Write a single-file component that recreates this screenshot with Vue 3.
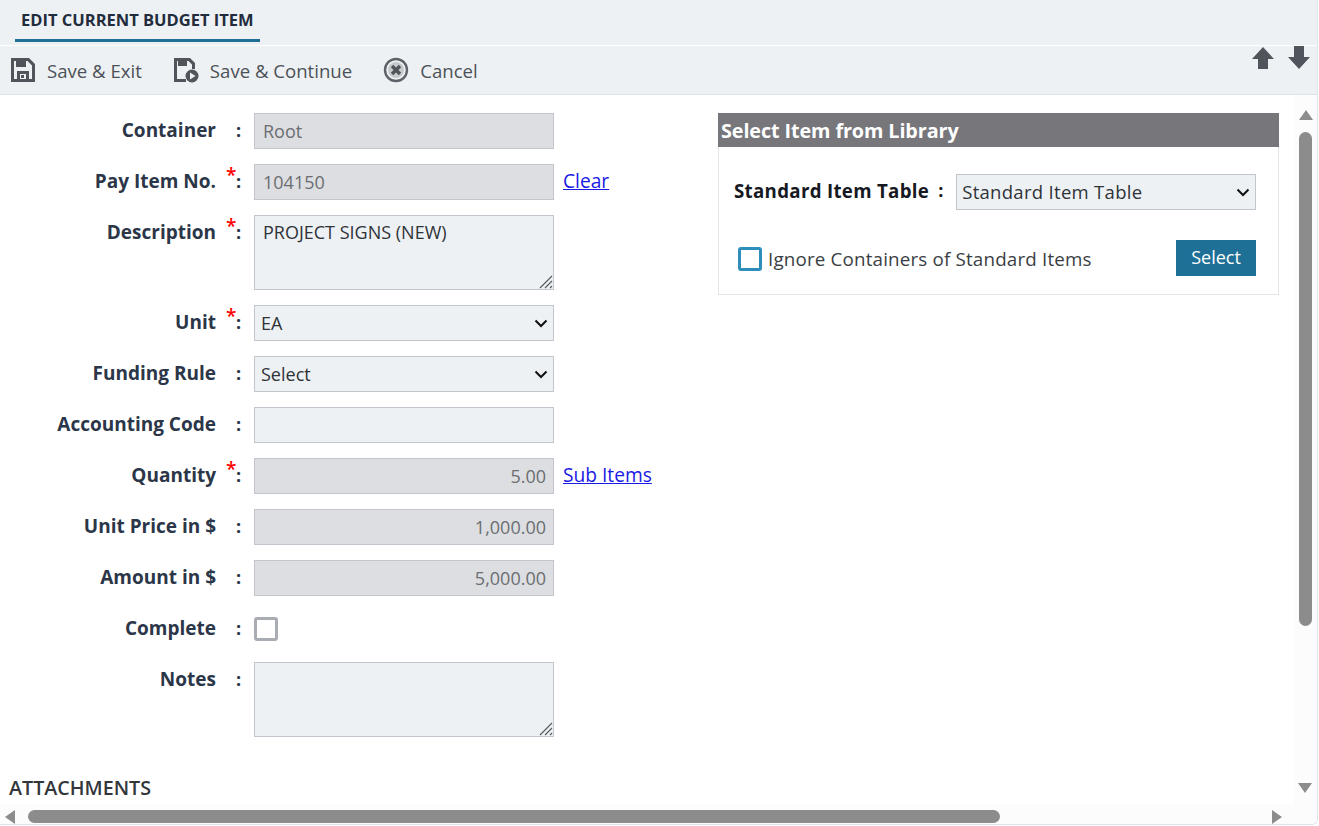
<script setup>
import { ref } from 'vue'

const notes = ref('')
const description = ref('PROJECT SIGNS (NEW)')
</script>

<template>
  <div class="page">
    <div class="tabbar">
      <div class="tab">EDIT CURRENT BUDGET ITEM</div>
    </div>

    <div class="toolbar">
      <a class="tool tool-save">
        <svg width="26" height="26" viewBox="0 0 26 26">
          <path fill="#50555c" fill-rule="evenodd" d="M1 1h18l6 6v18H1zM4 4v18h3v-8h12v8h3V8.5L17.5 4H16v6H6V4zM10 17v5h6v-5z" />
          <rect x="11" y="18" width="3" height="3" fill="#50555c" />
        </svg>
        <span>Save &amp; Exit</span>
      </a>
      <a class="tool tool-continue">
        <svg width="26" height="26" viewBox="0 0 26 26">
          <path fill="#50555c" fill-rule="evenodd" d="M1 1h16l5 5v6h-3V7.5L15.5 4H14v5H5V4H4v18h9v3H1z" />
          <circle cx="19" cy="19" r="6.5" fill="#50555c" />
          <path fill="#eef1f4" d="M17 15.5l5.5 3.5-5.5 3.5z" />
        </svg>
        <span>Save &amp; Continue</span>
      </a>
      <a class="tool">
        <svg width="26" height="26" viewBox="0 0 26 26">
          <circle cx="13" cy="13" r="11" fill="#eef1f4" stroke="#5e6268" stroke-width="2.4" />
          <circle cx="13" cy="13" r="8" fill="#8b8e92" opacity=".4" />
          <path d="M9 9l8 8M17 9l-8 8" stroke="#50555c" stroke-width="3.4" />
        </svg>
        <span>Cancel</span>
      </a>
      <div class="arrows">
        <svg width="24" height="24" viewBox="0 0 24 24"><path fill="#50555c" d="M12 1l11 12h-6v10H7V13H1z" /></svg>
        <svg width="24" height="24" viewBox="0 0 24 24"><path fill="#50555c" d="M7 0h10v11h6L12 23 1 11h6z" /></svg>
      </div>
    </div>

    <div class="body">
      <div class="content">
        <div class="columns">
          <form class="form" @submit.prevent>
            <div class="row">
              <label>Container</label><i></i><b>:</b>
              <input class="field off" value="Root" disabled />
            </div>
            <div class="row">
              <label>Pay Item No.</label><i class="req">*</i><b>:</b>
              <input class="field off" value="104150" disabled />
              <a class="link" href="#">Clear</a>
            </div>
            <div class="row">
              <label>Description</label><i class="req">*</i><b>:</b>
              <span class="area-wrap">
                <textarea v-model="description" class="field area"></textarea>
                <svg class="grip" width="14" height="14" viewBox="0 0 14 14">
                  <path d="M1 13L13 1M6 13l7-7M11 13l2-2" stroke="#55585c" stroke-width="1.1" fill="none" />
                </svg>
              </span>
            </div>
            <div class="row">
              <label>Unit</label><i class="req">*</i><b>:</b>
              <select class="field pick"><option>EA</option></select>
            </div>
            <div class="row">
              <label>Funding Rule</label><i></i><b>:</b>
              <select class="field pick"><option>Select</option></select>
            </div>
            <div class="row">
              <label>Accounting Code</label><i></i><b>:</b>
              <input class="field" />
            </div>
            <div class="row">
              <label>Quantity</label><i class="req">*</i><b>:</b>
              <input class="field off num" value="5.00" disabled />
              <a class="link" href="#">Sub Items</a>
            </div>
            <div class="row">
              <label>Unit Price in $</label><i></i><b>:</b>
              <input class="field off num" value="1,000.00" disabled />
            </div>
            <div class="row">
              <label>Amount in $</label><i></i><b>:</b>
              <input class="field off num" value="5,000.00" disabled />
            </div>
            <div class="row">
              <label>Complete</label><i></i><b>:</b>
              <span class="check grey"></span>
            </div>
            <div class="row">
              <label>Notes</label><i></i><b>:</b>
              <span class="area-wrap">
                <textarea v-model="notes" class="field area"></textarea>
                <svg class="grip" width="14" height="14" viewBox="0 0 14 14">
                  <path d="M1 13L13 1M6 13l7-7M11 13l2-2" stroke="#55585c" stroke-width="1.1" fill="none" />
                </svg>
              </span>
            </div>
          </form>

          <section class="library">
            <h3>Select Item from Library</h3>
            <div class="lib-row">
              <label>Standard Item Table</label><b>:</b>
              <select class="lib-select"><option>Standard Item Table</option></select>
            </div>
            <div class="lib-foot">
              <span class="check blue"></span>
              <span class="lib-text">Ignore Containers of Standard Items</span>
              <button type="button" class="btn">Select</button>
            </div>
          </section>
        </div>
        <h4 class="attach">ATTACHMENTS</h4>
      </div>

      <div class="vbar">
        <span class="tri up"></span>
        <span class="vthumb"></span>
        <span class="tri down"></span>
      </div>
    </div>

    <div class="hbar">
      <span class="tri left"></span>
      <span class="hthumb"></span>
      <span class="tri right"></span>
    </div>
  </div>
</template>

<style scoped>
.page {
  width: 1318px;
  height: 825px;
  box-sizing: border-box;
  overflow: hidden;
  display: flex;
  flex-direction: column;
  background: #fff;
  font-family: "Open Sans", "Noto Sans", sans-serif;
  color: #2b3648;
  border-right: 1px solid #e3e4e6;
  border-bottom: 1px solid #e3e4e6;
  border-bottom-right-radius: 6px;
}

.tabbar {
  height: 45px;
  box-sizing: border-box;
  background: #eef1f4;
  padding: 0 0 0 15px;
  flex: none;
}

.tab {
  height: 42px;
  box-sizing: border-box;
  padding: 10px 6px 0;
  font-size: 16.5px;
  font-weight: 700;
  line-height: 20px;
  color: #222c3c;
  border-bottom: 3px solid #1f7096;
  width: 245px;
  white-space: nowrap;
}

.toolbar {
  height: 50px;
  box-sizing: border-box;
  flex: none;
  display: flex;
  align-items: center;
  padding: 0 0 0 10px;
  background: #eef1f4;
  border-top: 1px solid #fff;
  border-bottom: 1px solid #dfe2e6;
  position: relative;
}

.tool {
  display: flex;
  align-items: center;
  gap: 11px;
  font-size: 18.6px;
  color: #4c5157;
  margin-right: 31px;
}

.arrows {
  position: absolute;
  right: 6px;
  top: 0;
  display: flex;
  gap: 12px;
}

.body {
  flex: 1;
  min-height: 0;
  display: flex;
}

.content {
  flex: 1;
  min-width: 0;
  padding-top: 18px;
}

.columns {
  display: flex;
}

.form {
  width: 718px;
  flex: none;
}

.row {
  display: flex;
  align-items: flex-start;
  margin-bottom: 15px;
  min-height: 36px;
}

.row label {
  width: 216px;
  text-align: right;
  font-size: 19px;
  font-weight: 700;
  line-height: 34px;
  flex: none;
  white-space: nowrap;
}

.row i {
  width: 16px;
  flex: none;
  color: #f00;
  font-style: normal;
  font-weight: 600;
  font-size: 19px;
  line-height: 22px;
  padding-left: 10px;
  box-sizing: border-box;
}

.row b {
  width: 22px;
  flex: none;
  font-size: 18px;
  font-weight: 700;
  line-height: 34px;
  padding-left: 4px;
  box-sizing: border-box;
}

.field {
  width: 300px;
  height: 36px;
  box-sizing: border-box;
  flex: none;
  border: 1px solid #c3c6cd;
  border-radius: 0;
  background: #eef1f4;
  padding: 0 7px 0 8px;
  font-family: inherit;
  font-size: 18px;
  color: #2f3338;
  outline: none;
  margin: 0;
}

.off {
  background: #dddee1;
  color: #6b6e72;
  -webkit-text-fill-color: #6b6e72;
  opacity: 1;
}

.num {
  text-align: right;
}

.area-wrap {
  position: relative;
  display: block;
  width: 300px;
  height: 75px;
  flex: none;
}

.area {
  height: 75px;
  padding: 4px 8px;
  line-height: 24px;
  display: block;
  resize: none;
}

.grip {
  position: absolute;
  right: 1px;
  bottom: 1px;
}

.pick,
.lib-select {
  appearance: none;
  padding: 0 2px 0 6px;
  background-image: url("data:image/svg+xml,%3Csvg xmlns='http://www.w3.org/2000/svg' width='14' height='9' viewBox='0 0 14 9'%3E%3Cpath d='M1.5 1.5L7 7l5.5-5.5' fill='none' stroke='%23111' stroke-width='2'/%3E%3C/svg%3E");
  background-repeat: no-repeat;
  background-position: right 5px center;
}

.link {
  margin-left: 9px;
  font-size: 19.2px;
  line-height: 34px;
  color: #1a1ae6;
  text-decoration: underline;
  white-space: nowrap;
}

.check {
  display: block;
  width: 24px;
  height: 24px;
  box-sizing: border-box;
  border-radius: 3px;
  background: #fff;
  flex: none;
}

.check.grey {
  margin-top: 6px;
  border: 3px solid #a9adb3;
}

.check.blue {
  margin-top: 2px;
  border: 3px solid #2e8dbb;
}

.library {
  width: 561px;
  height: 182px;
  box-sizing: border-box;
  flex: none;
  border: 1px solid #e3e4e6;
  border-top: 0;
}

.library h3 {
  margin: 0 -1px;
  height: 34px;
  background: #76767b;
  color: #fff;
  font-size: 19.8px;
  font-weight: 700;
  line-height: 35px;
  padding-left: 3px;
  letter-spacing: -0.1px;
}

.lib-row {
  display: flex;
  align-items: center;
  padding: 27px 0 0 15px;
}

.lib-row label {
  font-size: 18.7px;
  font-weight: 700;
  color: #16191f;
  letter-spacing: 0.3px;
  white-space: nowrap;
  margin-bottom: 4px;
}

.lib-row b {
  width: 18px;
  margin: 0 0 4px 9px;
  font-size: 18px;
  color: #16191f;
  flex: none;
}

.lib-select {
  width: 300px;
  height: 36px;
  margin-left: 0;
  box-sizing: border-box;
  border: 1px solid #c3c6cd;
  border-radius: 0;
  background-color: #eef1f4;
  font-family: inherit;
  font-size: 18.5px;
  letter-spacing: 0.3px;
  color: #2f3338;
  outline: none;
  flex: none;
  padding-bottom: 2px;
  padding-left: 5px;
}

.lib-foot {
  display: flex;
  align-items: center;
  padding: 30px 22px 0 19px;
}

.lib-text {
  flex: 1;
  margin-left: 6px;
  margin-top: 2px;
  font-size: 18.8px;
  letter-spacing: 0.17px;
  color: #3a3e43;
  white-space: nowrap;
}

.btn {
  width: 80px;
  height: 36px;
  border: 0;
  padding: 0 0 2px;
  background: #1f7096;
  color: #fff;
  font-family: inherit;
  font-size: 18px;
  font-weight: 400;
}

.attach {
  margin: 23px 0 0 9px;
  font-size: 19.7px;
  font-weight: 600;
  line-height: 26px;
  color: #33363b;
}

.vbar {
  width: 23px;
  flex: none;
  background: #fcfcfc;
  position: relative;
  display: flex;
  flex-direction: column;
  align-items: center;
}

.vthumb {
  width: 13px;
  height: 494px;
  margin-top: 12px;
  background: #8c8c8c;
  border-radius: 7px;
  flex: none;
}

.hbar {
  height: 20px;
  flex: none;
  background: #fcfcfc;
  position: relative;
  display: flex;
  align-items: center;
  padding: 5px 0 0 5px;
  box-sizing: border-box;
}

.hthumb {
  width: 972px;
  height: 13px;
  margin-left: 13px;
  background: #8c8c8c;
  border-radius: 7px;
  flex: none;
}

.tri {
  width: 0;
  height: 0;
  display: block;
  flex: none;
  border-style: solid;
  border-color: transparent;
}

.up {
  margin-top: 15px;
  border-width: 0 7px 10px;
  border-bottom-color: #8c8c8c;
}

.down {
  position: absolute;
  top: 688px;
  left: 4px;
  border-width: 10px 7px 0;
  border-top-color: #8c8c8c;
}

.left {
  border-width: 7px 10px 7px 0;
  border-right-color: #8c8c8c;
}

.right {
  position: absolute;
  left: 1272px;
  top: 6px;
  border-width: 7px 0 7px 10px;
  border-left-color: #8c8c8c;
}
</style>

<style>
html,
body {
  margin: 0;
  overflow: hidden;
}
</style>
